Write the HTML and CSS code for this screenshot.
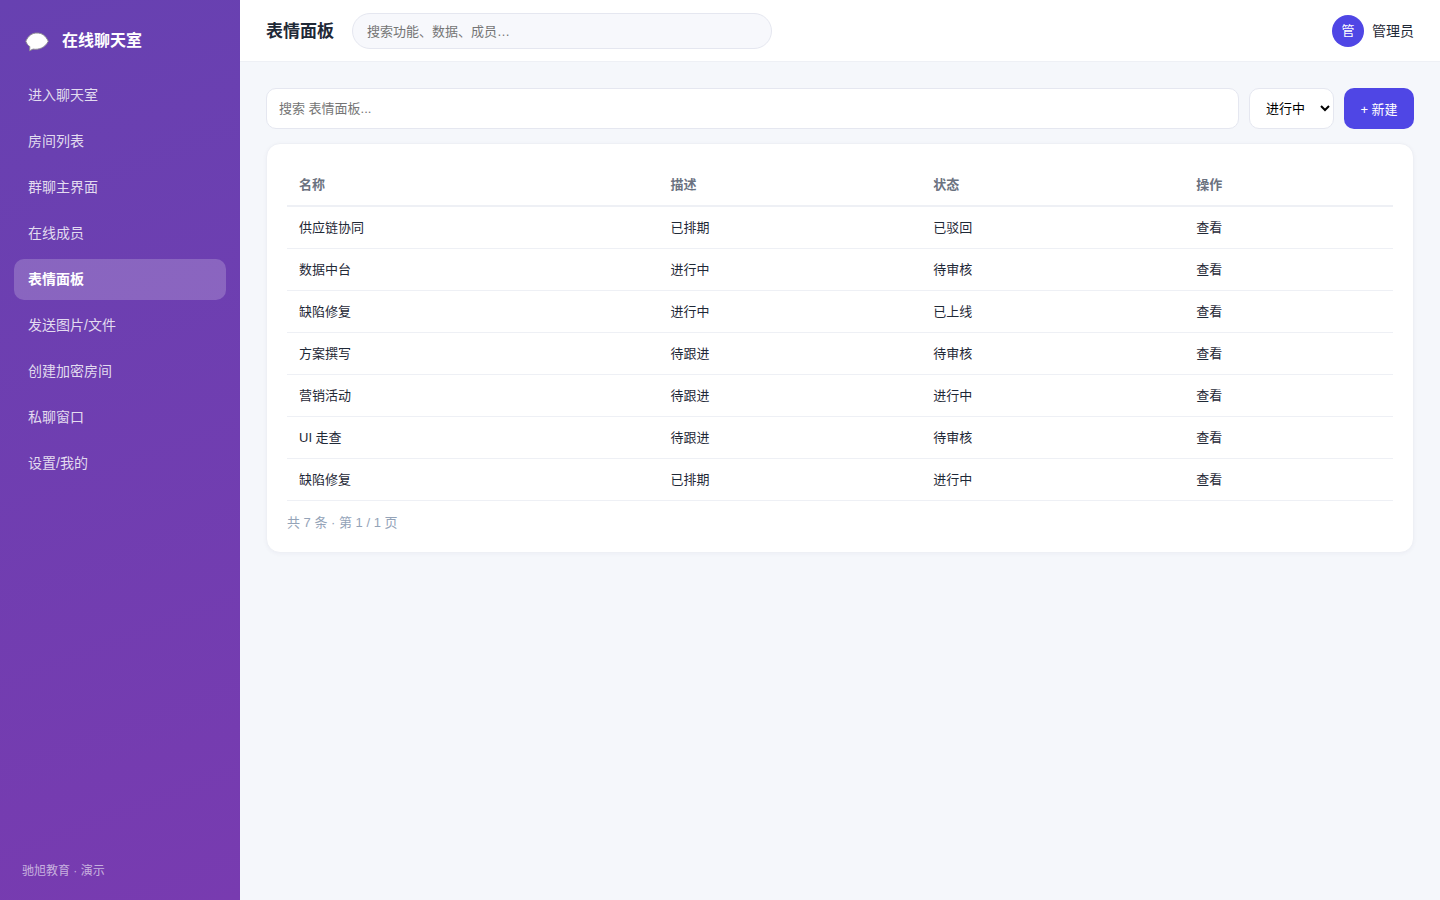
FILE: index.html
```
<!DOCTYPE html>
<html lang="zh-CN">
<head>
  <meta charset="UTF-8" />
  <meta name="viewport" content="width=device-width, initial-scale=1.0" />
  <title>表情面板 - 在线聊天室</title>
  <link rel="stylesheet" href="styles.css">
</head>
<body>
  <aside class="sidebar">
    <div class="brand">
      <svg class="brand-icon" width="24" height="24" viewBox="0 0 24 24" aria-hidden="true">
        <path d="M12 5C7 5 3.500 7.500 .8 13.200c1 2.800 2.300 4.300 4 5.400L4.600 22.800l3.400-1.700c6 .9 12-1.400 15.300-7.900C20.500 7.500 17 5 12 5z" fill="#fff" stroke="#8d8a94" stroke-width="1" />
      </svg>
      <span>在线聊天室</span>
    </div>
    <nav class="menu">
      <a href="#">进入聊天室</a>
      <a href="#">房间列表</a>
      <a href="#">群聊主界面</a>
      <a href="#">在线成员</a>
      <a href="#" class="active">表情面板</a>
      <a href="#">发送图片/文件</a>
      <a href="#">创建加密房间</a>
      <a href="#">私聊窗口</a>
      <a href="#">设置/我的</a>
    </nav>
    <div class="sidebar-foot">驰旭教育 · 演示</div>
  </aside>

  <div class="main">
    <header class="topbar">
      <h1>表情面板</h1>
      <input type="search" class="global-search" placeholder="搜索功能、数据、成员…" aria-label="全局搜索">
      <div class="user">
        <span class="avatar">管</span>
        <span>管理员</span>
      </div>
    </header>

    <main class="content">
      <div class="toolbar">
        <input type="text" placeholder="搜索 表情面板..." aria-label="搜索 表情面板">
        <select aria-label="状态">
          <option>进行中</option>
          <option>待审核</option>
          <option>已上线</option>
        </select>
        <button type="button">+ 新建</button>
      </div>

      <section class="card">
        <table>
          <thead>
            <tr><th>名称</th><th>描述</th><th>状态</th><th>操作</th></tr>
          </thead>
          <tbody>
            <tr><td>供应链协同</td><td>已排期</td><td>已驳回</td><td><a href="#">查看</a></td></tr>
            <tr><td>数据中台</td><td>进行中</td><td>待审核</td><td><a href="#">查看</a></td></tr>
            <tr><td>缺陷修复</td><td>进行中</td><td>已上线</td><td><a href="#">查看</a></td></tr>
            <tr><td>方案撰写</td><td>待跟进</td><td>待审核</td><td><a href="#">查看</a></td></tr>
            <tr><td>营销活动</td><td>待跟进</td><td>进行中</td><td><a href="#">查看</a></td></tr>
            <tr><td>UI 走查</td><td>待跟进</td><td>待审核</td><td><a href="#">查看</a></td></tr>
            <tr><td>缺陷修复</td><td>已排期</td><td>进行中</td><td><a href="#">查看</a></td></tr>
          </tbody>
        </table>
        <p class="pager">共 7 条 · 第 1 / 1 页</p>
      </section>
    </main>
  </div>
</body>
</html>
```
FILE: styles.css
```
* {
  box-sizing: border-box;
  margin: 0;
  padding: 0;
}

body {
  display: flex;
  min-height: 100vh;
  font-family: "Liberation Sans", "Noto Sans CJK SC", sans-serif;
  font-size: 14px;
  line-height: 21px;
  color: #1f2937;
  background: #f5f7fb;
}

a {
  color: inherit;
  text-decoration: none;
}

input, select, button {
  font-family: inherit;
  font-size: 13px;
}

/* sidebar */
.sidebar {
  display: flex;
  flex-direction: column;
  flex-shrink: 0;
  width: 240px;
  padding: 20px 14px;
  color: #fff;
  background: linear-gradient(160deg, #6741b1, #783bb0);
}

.brand {
  display: flex;
  align-items: center;
  gap: 13px;
  height: 40px;
  padding: 0 11px;
  margin-bottom: 15px;
  font-size: 16px;
  font-weight: 700;
}

.menu {
  display: flex;
  flex-direction: column;
  gap: 5px;
}

.menu a {
  padding: 10px 14px;
  border-radius: 10px;
  color: rgba(255, 255, 255, 0.82);
}

.menu a.active {
  color: #fff;
  font-weight: 700;
  background: rgba(255, 255, 255, 0.2);
}

.sidebar-foot {
  margin-top: auto;
  padding: 0 8px;
  font-size: 12px;
  line-height: 18px;
  color: rgba(255, 255, 255, 0.6);
}

/* main */
.main {
  flex: 1;
  min-width: 0;
}

.topbar {
  display: flex;
  align-items: center;
  gap: 18px;
  padding: 13px 26px 12px;
  background: #fff;
  border-bottom: 1px solid #eef0f5;
}

.topbar h1 {
  font-size: 17px;
  font-weight: 700;
}

.global-search {
  width: 420px;
  height: 36px;
  padding: 0 14px;
  border: 1px solid #e5e7f0;
  border-radius: 18px;
  background: #f7f8fc;
  appearance: none;
}

.user {
  display: flex;
  align-items: center;
  gap: 8px;
  margin-left: auto;
}

.avatar {
  width: 32px;
  height: 32px;
  border-radius: 50%;
  background: #4f46e5;
  color: #fff;
  text-align: center;
  font-size: 13px;
  line-height: 32px;
}

.content {
  padding: 26px;
}

.toolbar {
  display: flex;
  gap: 10px;
  height: 41px;
  margin-bottom: 14px;
}

.toolbar input {
  flex: 1;
  min-width: 0;
  padding: 0 12px;
  border: 1px solid #e5e7f0;
  border-radius: 10px;
  background: #fff;
}

.toolbar select {
  width: 85px;
  padding: 0 0 0 12px;
  border: 1px solid #e5e7f0;
  border-radius: 10px;
  background: #fff;
  color: #000;
}

.toolbar button {
  width: 70px;
  border: none;
  border-radius: 10px;
  background: #4f46e5;
  color: #fff;
}

.card {
  padding: 20px;
  border: 1px solid #eef0f5;
  border-radius: 14px;
  background: #fff;
  box-shadow: 0 1px 4px rgba(30, 35, 90, 0.04);
}

table {
  width: 100%;
  border-spacing: 0;
  font-size: 13px;
}

th, td {
  padding: 10px 12px;
  text-align: left;
  border-bottom: 1px solid #eef0f5;
}

th {
  color: #6b7280;
  border-bottom-width: 2px;
}

.pager {
  margin-top: 12px;
  font-size: 13px;
  line-height: 19px;
  color: #94a3b8;
}
```
